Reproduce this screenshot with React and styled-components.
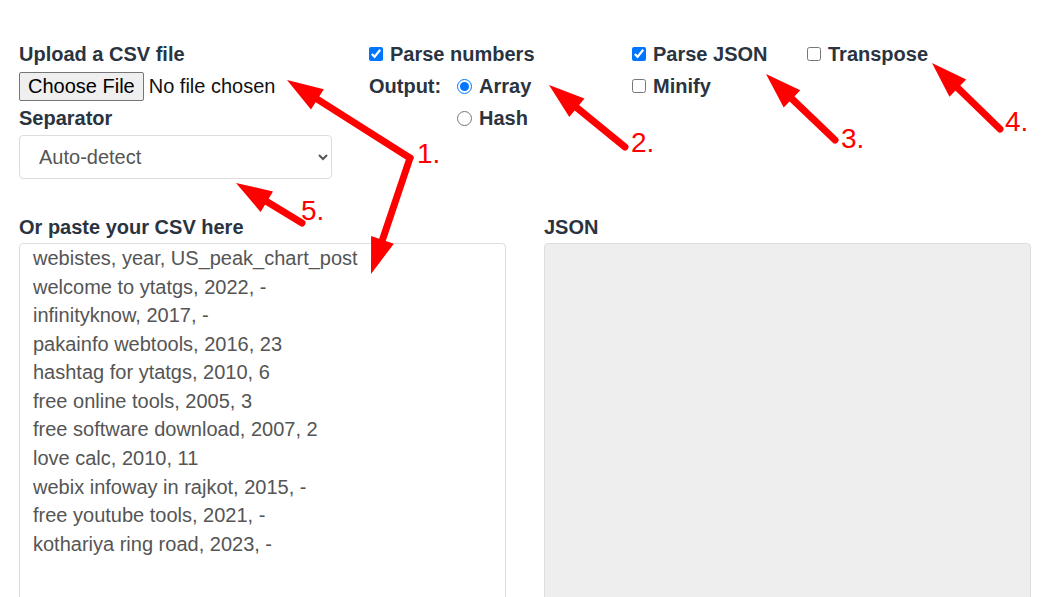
import React from 'react';
import styled, { createGlobalStyle } from 'styled-components';

const GlobalStyle = createGlobalStyle`
  html, body {
    margin: 0;
    padding: 0;
    background: #fff;
  }
  body {
    font-family: "Liberation Sans", Arial, sans-serif;
    font-size: 20px;
    line-height: 1.42857;
    color: #2a3441;
  }
`;

const Page = styled.div`
  position: relative;
  width: 1049px;
  height: 597px;
  overflow: hidden;
  box-sizing: border-box;
  padding: 40px 18px 0 19px;
`;

const TopSection = styled.div`
  display: flex;
  align-items: flex-start;
`;

const UploadColumn = styled.div`
  flex: none;
  width: 350px;
  display: flex;
  flex-direction: column;
`;

const FieldLabel = styled.label`
  display: block;
  font-weight: bold;
  line-height: 28px;
  margin-top: ${(p) => p.$gap || 0}px;
`;

const FileRow = styled.div`
  display: flex;
  align-items: center;
  height: 29px;
  margin-top: 4px;
  color: #111;
`;

const FileButton = styled.button`
  height: 29px;
  padding: 0 8px;
  margin: 0 5px 0 0;
  font: inherit;
  line-height: 27px;
  color: #000;
  background: #efefef;
  border: 1px solid #767676;
  border-radius: 2px;
`;

const Select = styled.select`
  width: 313px;
  height: 44px;
  margin-top: 3px;
  padding: 0 10px 0 15px;
  font: inherit;
  color: #555;
  background: #fff;
  border: 1px solid #ddd;
  border-radius: 4px;
  box-sizing: border-box;
`;

const OptionsColumn = styled.div`
  flex: none;
  width: ${(p) => p.$width}px;
  display: grid;
  grid-template-columns: ${(p) => p.$cols || '1fr'};
  grid-auto-rows: 28px;
  row-gap: 4px;
`;

const Option = styled.label`
  display: flex;
  align-items: center;
  font-weight: bold;
  white-space: nowrap;
  grid-column: ${(p) => p.$span || 'auto'};
`;

const Box = styled.input`
  flex: none;
  width: ${(p) => (p.type === 'radio' ? 15 : 14)}px;
  height: ${(p) => (p.type === 'radio' ? 15 : 14)}px;
  margin: 0 7px 0 0;
`;

const Editors = styled.div`
  display: grid;
  grid-template-columns: 1fr 1fr;
  column-gap: 38px;
  margin-top: 34px;
`;

const EditorPane = styled.div`
  display: flex;
  flex-direction: column;
`;

const EditorLabel = styled.label`
  font-weight: bold;
  line-height: 28px;
  margin-bottom: 2px;
`;

const CsvArea = styled.textarea`
  display: block;
  width: 100%;
  height: 380px;
  box-sizing: border-box;
  margin: 0;
  padding: 0 13px;
  font: inherit;
  line-height: 28.57px;
  color: #555;
  border: 1px solid #ddd;
  border-radius: 4px;
  resize: none;
  overflow: hidden;
`;

const JsonArea = styled.div`
  height: 380px;
  box-sizing: border-box;
  background: #eee;
  border: 1px solid #ddd;
  border-radius: 4px;
`;

const Overlay = styled.svg`
  position: absolute;
  top: 0;
  left: 0;
  pointer-events: none;
`;

const NumberMark = styled.text`
  font-family: "Liberation Sans", Arial, sans-serif;
  font-size: 28px;
  fill: #ff0000;
`;

const csv = [
  'webistes, year, US_peak_chart_post',
  'welcome to ytatgs, 2022, -',
  'infinityknow, 2017, -',
  'pakainfo webtools, 2016, 23',
  'hashtag for ytatgs, 2010, 6',
  'free online tools, 2005, 3',
  'free software download, 2007, 2',
  'love calc, 2010, 11',
  'webix infoway in rajkot, 2015, -',
  'free youtube tools, 2021, -',
  'kothariya ring road, 2023, -',
].join('\n');

// tail -> tip, with a triangle head at the tip
const Arrow = ({ from, to, head = 36, half = 12 }) => {
  const [x1, y1] = from;
  const [x2, y2] = to;
  const len = Math.hypot(x2 - x1, y2 - y1);
  const ux = (x2 - x1) / len;
  const uy = (y2 - y1) / len;
  const bx = x2 - ux * head;
  const by = y2 - uy * head;
  const nx = -uy;
  const ny = ux;
  const pts = [
    [x2, y2],
    [bx + nx * half, by + ny * half],
    [bx - nx * half, by - ny * half],
  ].map((p) => p.join(',')).join(' ');
  return (
    <g>
      <line
        x1={x1}
        y1={y1}
        x2={bx + ux * 4}
        y2={by + uy * 4}
        stroke="#ff0000"
        strokeWidth="7"
        strokeLinecap="round"
      />
      <polygon points={pts} fill="#ff0000" />
    </g>
  );
};

const annotations = [
  { from: [410, 158], to: [287, 80] },
  { from: [410, 158], to: [371, 274] },
  { from: [625, 147], to: [549, 85] },
  { from: [835, 140], to: [766, 74] },
  { from: [1000, 129], to: [932, 63] },
  { from: [302, 223], to: [236, 183] },
];

const marks = [
  { text: '1.', x: 417, y: 163 },
  { text: '2.', x: 631, y: 152 },
  { text: '3.', x: 841, y: 148 },
  { text: '4.', x: 1005, y: 131 },
  { text: '5.', x: 301, y: 220 },
];

const App = () => (
  <>
    <GlobalStyle />
    <Page>
      <TopSection>
        <UploadColumn>
          <FieldLabel>Upload a CSV file</FieldLabel>
          <FileRow>
            <FileButton type="button">Choose File</FileButton>
            <span>No file chosen</span>
          </FileRow>
          <FieldLabel $gap={3}>Separator</FieldLabel>
          <Select defaultValue="auto">
            <option value="auto">Auto-detect</option>
            <option value=",">Comma</option>
            <option value=";">Semicolon</option>
            <option value="tab">Tab</option>
          </Select>
        </UploadColumn>

        <OptionsColumn $width={263} $cols="88px auto">
          <Option $span="1 / 3">
            <Box type="checkbox" defaultChecked />
            Parse numbers
          </Option>
          <Option>Output:</Option>
          <Option>
            <Box type="radio" name="output" defaultChecked />
            Array
          </Option>
          <Option $span="2">
            <Box type="radio" name="output" />
            Hash
          </Option>
        </OptionsColumn>

        <OptionsColumn $width={175}>
          <Option>
            <Box type="checkbox" defaultChecked />
            Parse JSON
          </Option>
          <Option>
            <Box type="checkbox" />
            Minify
          </Option>
        </OptionsColumn>

        <OptionsColumn $width={200}>
          <Option>
            <Box type="checkbox" />
            Transpose
          </Option>
        </OptionsColumn>
      </TopSection>

      <Editors>
        <EditorPane>
          <EditorLabel>Or paste your CSV here</EditorLabel>
          <CsvArea defaultValue={csv} spellCheck={false} />
        </EditorPane>
        <EditorPane>
          <EditorLabel>JSON</EditorLabel>
          <JsonArea />
        </EditorPane>
      </Editors>

      <Overlay width="1049" height="597" viewBox="0 0 1049 597">
        {annotations.map((a, i) => (
          <Arrow key={i} from={a.from} to={a.to} />
        ))}
        {marks.map((m) => (
          <NumberMark key={m.text} x={m.x} y={m.y}>{m.text}</NumberMark>
        ))}
      </Overlay>
    </Page>
  </>
);

export default App;
